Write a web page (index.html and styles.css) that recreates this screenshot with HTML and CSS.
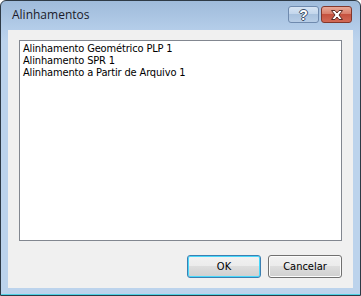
FILE: index.html
```html
<!DOCTYPE html>
<html>
<head>
<meta charset="utf-8">
<link rel="stylesheet" href="styles.css">
</head>
<body>
<div class="window">
  <div class="titlebar">
    <span class="title">Alinhamentos</span>
    <div class="caption-buttons">
      <div class="cbtn help"><span class="qmark">?</span></div>
      <div class="cbtn close">
        <svg width="14" height="10" viewBox="0 0 14 10"><path d="M1.5 0.5 H5 L7 3 L9 0.5 H12.5 L9 5 L12.5 9.5 H9 L7 7 L5 9.5 H1.5 L5 5 Z" fill="#fff" stroke="#5b2a23" stroke-width="1" stroke-linejoin="round"/></svg>
      </div>
    </div>
  </div>
  <div class="client">
    <div class="listbox">
      <div class="item">Alinhamento Geométrico PLP 1</div>
      <div class="item">Alinhamento SPR 1</div>
      <div class="item">Alinhamento a Partir de Arquivo 1</div>
    </div>
    <div class="buttons">
      <div class="btn default">OK</div>
      <div class="btn">Cancelar</div>
    </div>
  </div>
</div>
</body>
</html>
```
FILE: styles.css
```css
html, body {
  margin: 0;
  padding: 0;
  background: #ffffff;
}
.window {
  width: 361px;
  height: 296px;
  box-sizing: border-box;
  border: 1px solid #2e3a46;
  border-radius: 6px 6px 0 0;
  padding: 0 7px 7px 7px;
  background: linear-gradient(to bottom, #9fbbdb 0px, #b4cde9 28px, #bcd3ec 40px, #bcd3ec 100%);
  box-shadow: inset 0 -1px 0 #4fd1e4;
  display: flex;
  flex-direction: column;
}
.titlebar {
  height: 29px;
  display: flex;
  align-items: center;
  padding: 0 1px 2px 4px;
  box-sizing: border-box;
}
.title {
  font-family: "Open Sans", "Noto Sans", sans-serif;
  font-size: 12px;
  color: #1b1b2a;
  flex: 1;
}
.caption-buttons {
  display: flex;
  gap: 2px;
}
.cbtn {
  width: 31px;
  height: 17px;
  box-sizing: border-box;
  border-radius: 3px;
  display: flex;
  align-items: center;
  justify-content: center;
}
.help {
  border: 1px solid #6f8aae;
  background: linear-gradient(to bottom, #d7e4f3 0%, #c3d6ec 45%, #a9c2de 50%, #b7cde6 100%);
}
.qmark {
  font-family: "Liberation Sans", sans-serif;
  font-weight: bold;
  font-size: 14px;
  line-height: 14px;
  color: #fff;
  text-shadow: 1px 0 0 #3d4e66, -1px 0 0 #3d4e66, 0 1px 0 #3d4e66, 0 -1px 0 #3d4e66;
}
.close {
  border: 1px solid #83372b;
  background: linear-gradient(to bottom, #e9a998 0%, #d97f6b 45%, #c5523f 50%, #d26a57 100%);
}
.client {
  height: 258px;
  background: #f0f0f0;
  box-sizing: border-box;
  padding: 10px 11px 0 11px;
  display: flex;
  flex-direction: column;
}
.listbox {
  height: 201px;
  box-sizing: border-box;
  border: 1px solid #828790;
  background: #ffffff;
  padding: 2px 3px;
}
.item {
  font-family: "DejaVu Sans Condensed", "DejaVu Sans", sans-serif;
  font-size: 11px;
  letter-spacing: -0.15px;
  line-height: 12px;
  height: 12px;
  color: #000;
  white-space: nowrap;
}
.buttons {
  display: flex;
  justify-content: flex-end;
  gap: 7px;
  margin-top: 14px;
}
.btn {
  width: 74px;
  height: 23px;
  box-sizing: border-box;
  border: 1px solid #707070;
  border-radius: 3px;
  background: linear-gradient(to bottom, #f2f2f2 0%, #ebebeb 49%, #dddddd 50%, #cfcfcf 100%);
  box-shadow: inset 0 0 0 1px #fcfcfc;
  font-family: "DejaVu Sans Condensed", "DejaVu Sans", sans-serif;
  font-size: 11px;
  color: #000;
  display: flex;
  align-items: center;
  justify-content: center;
}
.btn.default {
  border-color: #3c7fb1;
  box-shadow: inset 0 0 0 1px #48d8fb;
}
```
